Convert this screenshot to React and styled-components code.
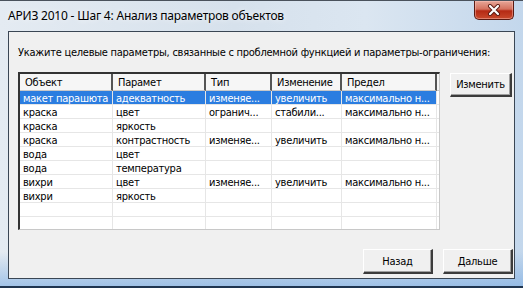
import React from "react";
import styled, { createGlobalStyle } from "styled-components";

const GlobalStyle = createGlobalStyle`
  html, body {
    margin: 0;
    padding: 0;
    background: #2e3a48;
  }
  * {
    box-sizing: border-box;
  }
`;

const Window = styled.div`
  width: 523px;
  height: 288px;
  display: flex;
  flex-direction: column;
  padding: 0 8px 7px 8px;
  border-top: 1px solid #4a525c;
  border-bottom: 2px solid #1f3550;
  background: linear-gradient(
      180deg,
      rgba(255, 255, 255, 0) 0%,
      rgba(255, 255, 255, 0) 88%,
      rgba(120, 170, 225, 0.6) 100%
    ),
    linear-gradient(90deg, #e4ebf2 0%, #d6e1ec 45%, #dbe6f1 70%, #c3d7ec 100%);
  overflow: hidden;
`;

const TitleBar = styled.div`
  height: 30px;
  display: flex;
  align-items: flex-start;
  justify-content: space-between;
`;

const Title = styled.div`
  padding-top: 6px;
  font-family: "Noto Sans", "Open Sans", sans-serif;
  font-size: 12px;
  letter-spacing: -0.2px;
  color: #000;
  text-shadow: 0 0 6px rgba(255, 255, 255, 0.9);
  white-space: nowrap;
`;

const CloseButton = styled.div`
  width: 40px;
  height: 19px;
  margin-right: 1px;
  display: flex;
  align-items: center;
  justify-content: center;
  border: 1px solid #5a1a12;
  border-top: none;
  border-radius: 0 0 5px 5px;
  background: linear-gradient(180deg, #e7a698 0%, #d4715e 45%, #b52a14 55%, #c8492c 100%);
  box-shadow: inset 0 0 0 1px rgba(255, 200, 190, 0.45);
`;

const Client = styled.div`
  flex: 1;
  display: flex;
  flex-direction: column;
  padding: 14px 1px 4px 9px;
  background: #f0f0f0;
  border: 1px solid #3a4654;
  font-family: "DejaVu Sans Condensed", "Liberation Sans", sans-serif;
  font-size: 11px;
  letter-spacing: -0.25px;
  color: #000;
`;

const Prompt = styled.div`
  height: 13px;
  line-height: 13px;
  margin-bottom: 13px;
  white-space: nowrap;
`;

const Main = styled.div`
  display: flex;
  gap: 10px;
  align-items: flex-start;
`;

const ListView = styled.div`
  width: 422px;
  height: 158px;
  background: #fff;
  border-style: solid;
  border-width: 2px 1px 1px 2px;
  border-color: #333 #c8c8c8 #c8c8c8 #333;
  overflow: hidden;
`;

const GridRow = styled.div`
  display: grid;
  grid-template-columns: 93px 93px 66px 70px 95px 1fr;
  height: ${(p) => (p.$header ? "17px" : "14px")};
`;

const HeaderCell = styled.div`
  padding: 0 5px;
  line-height: 17px;
  background: #f6f6f6;
  border-right: 2px solid #555;
  border-bottom: 1px solid #c8c8c8;
  white-space: nowrap;
  overflow: hidden;

  &:last-child {
    border-right: none;
  }
`;

const Cell = styled.div`
  padding: 1px 3px 0;
  line-height: 13px;
  white-space: nowrap;
  overflow: hidden;
  border-right: 1px solid #e6e6e6;
  border-bottom: 1px solid #e6e6e6;
  background: ${(p) => (p.$selected ? "#2b7de0" : "transparent")};
  color: ${(p) => (p.$selected ? "#fff" : "#000")};

  &:last-child {
    border-right: none;
    background: transparent;
  }
`;

const Button = styled.div`
  width: ${(p) => p.$width || 70}px;
  height: ${(p) => p.$height || 25}px;
  display: flex;
  align-items: center;
  justify-content: center;
  background: #f0f0f0;
  border-style: solid;
  border-width: 1px 2px 2px 1px;
  border-color: #fff #3c3c3c #3c3c3c #fff;
  box-shadow: inset -1px -1px 0 #a0a0a0;
  flex-shrink: 0;
`;

const SideColumn = styled.div`
  padding-top: 1px;
`;

const Footer = styled.div`
  margin-top: auto;
  display: flex;
  justify-content: flex-end;
  gap: 10px;
`;

const columns = ["Объект", "Парамет", "Тип", "Изменение", "Предел"];

const rows = [
  ["макет парашюта", "адекватность", "изменяе...", "увеличить", "максимально н..."],
  ["краска", "цвет", "огранич...", "стабили...", "максимально н..."],
  ["краска", "яркость", "", "", ""],
  ["краска", "контрастность", "изменяе...", "увеличить", "максимально н..."],
  ["вода", "цвет", "", "", ""],
  ["вода", "температура", "", "", ""],
  ["вихри", "цвет", "изменяе...", "увеличить", "максимально н..."],
  ["вихри", "яркость", "", "", ""],
  ["", "", "", "", ""],
  ["", "", "", "", ""],
];

const CloseIcon = () => (
  <svg width="14" height="12" viewBox="0 0 14 12">
    <path d="M3 2 L11 10 M11 2 L3 10" stroke="#5a1a12" strokeWidth="4" strokeLinecap="round" />
    <path d="M3 2 L11 10 M11 2 L3 10" stroke="#fff" strokeWidth="2.2" strokeLinecap="round" />
  </svg>
);

export default function App() {
  return (
    <>
      <GlobalStyle />
      <Window>
        <TitleBar>
          <Title>АРИЗ 2010 - Шаг 4: Анализ параметров объектов</Title>
          <CloseButton>
            <CloseIcon />
          </CloseButton>
        </TitleBar>
        <Client>
          <Prompt>
            Укажите целевые параметры, связанные с проблемной функцией и параметры-ограничения:
          </Prompt>
          <Main>
            <ListView>
              <GridRow $header>
                {columns.map((c) => (
                  <HeaderCell key={c}>{c}</HeaderCell>
                ))}
                <HeaderCell />
              </GridRow>
              {rows.map((r, i) => (
                <GridRow key={i}>
                  {r.map((v, j) => (
                    <Cell key={j} $selected={i === 0}>
                      {v}
                    </Cell>
                  ))}
                  <Cell />
                </GridRow>
              ))}
            </ListView>
            <SideColumn>
              <Button $width={62} $height={24}>
                Изменить
              </Button>
            </SideColumn>
          </Main>
          <Footer>
            <Button>Назад</Button>
            <Button>Дальше</Button>
          </Footer>
        </Client>
      </Window>
    </>
  );
}
